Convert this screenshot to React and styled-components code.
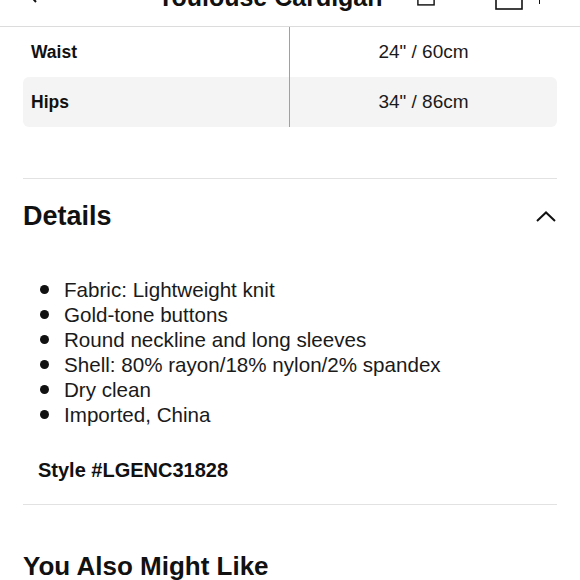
import styled, { createGlobalStyle } from "styled-components";

const GlobalStyle = createGlobalStyle`
	html, body {
		margin: 0;
		padding: 0;
		background: #fff;
	}
	body {
		font-family: "Liberation Sans", Arial, sans-serif;
		color: #111;
		overflow: hidden;
	}
`;

const sizes = [
	{ label: "Waist", value: `24" / 60cm` },
	{ label: "Hips", value: `34" / 86cm` },
];

const details = [
	"Fabric: Lightweight knit",
	"Gold-tone buttons",
	"Round neckline and long sleeves",
	"Shell: 80% rayon/18% nylon/2% spandex",
	"Dry clean",
	"Imported, China",
];

const App = () => {
	return (
		<Page>
			<GlobalStyle />
			<Header>
				<HeaderRow>
					<BackIcon viewBox="0 0 12 20">
						<path d="M10 1 L2 10 L10 19" />
					</BackIcon>
					<Title>Toulouse Cardigan</Title>
					<ShareIcon viewBox="0 0 20 24">
						<rect x="1" y="1" width="18" height="22" />
					</ShareIcon>
					<BagIcon viewBox="0 0 28 28">
						<rect x="1" y="1" width="26" height="26" />
					</BagIcon>
					<Tick />
				</HeaderRow>
			</Header>

			<SizeTable>
				{sizes.map((s, i) => (
					<SizeRow key={s.label} shaded={i % 2 === 1}>
						<SizeLabel>{s.label}</SizeLabel>
						<SizeValue>{s.value}</SizeValue>
					</SizeRow>
				))}
			</SizeTable>

			<Divider top={51} />

			<SectionHead>
				<SectionTitle>Details</SectionTitle>
				<Chevron viewBox="0 0 20 11">
					<path d="M1 10 L10 1.5 L19 10" />
				</Chevron>
			</SectionHead>

			<DetailList>
				{details.map((d) => (
					<DetailItem key={d}>{d}</DetailItem>
				))}
			</DetailList>

			<StyleNumber>Style #LGENC31828</StyleNumber>

			<Divider top={22} />

			<AlsoTitle>You Also Might Like</AlsoTitle>
		</Page>
	);
};

const Page = styled.div`
	width: 580px;
	height: 580px;
	overflow: hidden;
`;

const Header = styled.header`
	height: 26px;
	border-bottom: 1px solid #dcdcdc;
	overflow: hidden;
`;

const HeaderRow = styled.div`
	display: flex;
	align-items: flex-end;
	height: 26px;
	padding-left: 26px;
`;

const BackIcon = styled.svg`
	width: 12px;
	height: 20px;
	margin-bottom: 23px;
	fill: none;
	stroke: #111;
	stroke-width: 2;
`;

const Title = styled.h1`
	margin: 0 0 16px 120px;
	font-size: 25px;
	line-height: 1;
	font-weight: 700;
	white-space: nowrap;
`;

const ShareIcon = styled.svg`
	width: 18px;
	height: 22px;
	margin: 0 0 20px 34px;
	fill: none;
	stroke: #111;
	stroke-width: 1.6;
`;

const BagIcon = styled.svg`
	width: 28px;
	height: 28px;
	margin: 0 0 16px 60px;
	fill: none;
	stroke: #111;
	stroke-width: 1.6;
`;

const Tick = styled.span`
	display: block;
	width: 1.5px;
	height: 12px;
	margin: 0 0 22px 16px;
	background: #111;
`;

const SizeTable = styled.div`
	margin: 0 23px;
`;

const SizeRow = styled.div`
	display: grid;
	grid-template-columns: 1fr 1fr;
	height: 50px;
	border-radius: 6px;
	background: ${(props) => (props.shaded ? "#f4f4f4" : "transparent")};
`;

const SizeLabel = styled.div`
	display: flex;
	align-items: center;
	padding-left: 8px;
	font-size: 17.5px;
	font-weight: 700;
	color: #111;
	border-right: 1.5px solid #a0a0a0;
`;

const SizeValue = styled.div`
	display: flex;
	align-items: center;
	justify-content: center;
	font-size: 19px;
	color: #1a1a1a;
`;

const Divider = styled.hr`
	margin: ${(props) => props.top}px 23px 0;
	border: none;
	height: 1px;
	background: #e2e2e2;
`;

const SectionHead = styled.div`
	display: flex;
	align-items: center;
	justify-content: space-between;
	margin: 21px 23px 0;
	height: 32px;
`;

const SectionTitle = styled.h2`
	margin: 0;
	font-size: 27px;
	line-height: 32px;
	font-weight: 700;
`;

const Chevron = styled.svg`
	width: 20px;
	height: 11px;
	margin-right: 1px;
	fill: none;
	stroke: #111;
	stroke-width: 2;
`;

const DetailList = styled.ul`
	list-style: none;
	margin: 45px 0 0;
	padding: 0 0 0 40px;
`;

const DetailItem = styled.li`
	display: flex;
	align-items: center;
	gap: 15px;
	height: 25px;
	font-size: 20.6px;
	color: #1a1a1a;

	&::before {
		content: "";
		width: 9px;
		height: 9px;
		border-radius: 50%;
		background: #111;
		flex-shrink: 0;
	}
`;

const StyleNumber = styled.div`
	margin: 31px 0 0 38px;
	font-size: 20px;
	line-height: 24px;
	font-weight: 700;
`;

const AlsoTitle = styled.h2`
	margin: 46px 23px 0;
	font-size: 26px;
	line-height: 31px;
	font-weight: 700;
`;

export default App;
